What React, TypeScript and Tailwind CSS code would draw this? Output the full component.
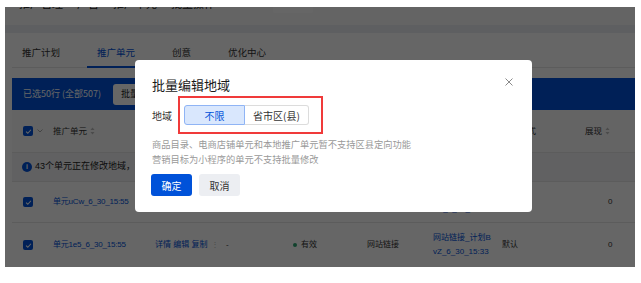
import React from "react";

const cols = "grid grid-cols-[41px_102px_71px_67px_74px_66px_69px_83px_1fr] items-center";

function Check() {
  return (
    <span className="flex h-[10px] w-[10px] items-center justify-center rounded-[2px] bg-[#0052d9]">
      <svg width="7" height="7" viewBox="0 0 8 8" fill="none">
        <path d="M1.2 4.1 3.2 6 6.8 2" stroke="#fff" strokeWidth="1.2" />
      </svg>
    </span>
  );
}

function SortIcon() {
  return (
    <svg width="5" height="8" viewBox="0 0 5 8" className="ml-[3px]">
      <path d="M2.5 0.5 4.5 3H0.5z" fill="#bbb" />
      <path d="M2.5 7.5 4.5 5H0.5z" fill="#bbb" />
    </svg>
  );
}

function LinkCell({ a, b }: { a: string; b: string }) {
  return (
    <div className="flex flex-col leading-[14px] text-[#0052d9]">
      <span>{a}</span>
      <span>{b}</span>
    </div>
  );
}

export default function App() {
  return (
    <div className="w-[641px] h-[283px] bg-white pt-[7px] pl-[5px] font-['Noto_Sans_CJK_SC',sans-serif]">
      <div className="relative w-[630px] h-[260px] overflow-hidden bg-white text-[#333]">
        {/* top bar, cut off */}
        <div className="flex h-[18px] items-start bg-[#fafafa] pl-[14px] text-[11px]">
          <div className="-mt-[12px] flex w-[254px] gap-[14px] text-[#222]">
            <span>推广管理</span>
            <span>广告</span>
            <span>推广单元</span>
            <span>批量操作</span>
          </div>
          <div className="-mt-[9px] h-[15px] w-[40px] rounded-[2px] bg-white" />
        </div>
        <div className="h-[8px] bg-[#eceef2]" />

        {/* tabs */}
        <div className="ml-[7px] flex h-[35px] gap-[17px] border-b border-[#e7e7e7] pt-[4px] text-[9.5px]">
          <div className="flex items-center px-[10px]">推广计划</div>
          <div className="relative flex items-center px-[10px] text-[#0052d9]">
            推广单元
            <div className="absolute bottom-[-1px] left-0 right-[5px] h-[2px] bg-[#0052d9]" />
          </div>
          <div className="flex items-center px-[10px]">创意</div>
          <div className="flex items-center px-[10px]">优化中心</div>
        </div>

        {/* selection bar */}
        <div className="ml-[7px] mt-[10px] flex h-[32px] items-center bg-[#0052d9] pl-[11px] text-[9px] text-white">
          <span>已选50行 (全部507)</span>
          <div className="ml-[12px] flex h-[21px] items-center rounded-[3px] bg-white px-[8px] text-[#222]">
            批量编辑
          </div>
        </div>

        {/* table */}
        <div className="ml-[7px] text-[8px] font-['Liberation_Sans','Noto_Sans_CJK_SC',sans-serif]">
          <div className={`${cols} h-[43px] border-b border-[#e7e7e7] bg-[#fafafa] text-[8.5px]`}>
            <div className="flex items-center pl-[11px]">
              <Check />
              <svg width="6" height="4" viewBox="0 0 6 4" className="ml-[4px]">
                <path d="M0.5 0.5 3 3 5.5 0.5" stroke="#aaa" fill="none" />
              </svg>
            </div>
            <div className="flex items-center">推广单元<SortIcon /></div>
            <div>操作</div>
            <div>预算</div>
            <div>状态</div>
            <div>推广类型</div>
            <div>推广计划</div>
            <div>出价方式</div>
            <div className="flex items-center">展现<SortIcon /></div>
          </div>

          <div className="flex h-[29px] items-center border-b border-[#e7e7e7] bg-[#f2f3f5] pl-[10px] text-[9px]">
            <span className="flex h-[10px] w-[10px] items-center justify-center rounded-full bg-[#0052d9] text-[7px] font-bold text-white">
              i
            </span>
            <span className="ml-[3px] text-[#222]">43个单元正在修改地域，请稍后刷新页面查看修改结果</span>
          </div>

          <div className={`${cols} h-[41px] border-b border-[#e7e7e7]`}>
            <div className="pl-[11px]"><Check /></div>
            <div className="tracking-[-0.2px] text-[#0052d9]">单元uCw_6_30_15:55</div>
            <div className="text-[#0052d9]">详情 编辑 复制</div>
            <div>-</div>
            <div>有效</div>
            <div>网站链接</div>
            <LinkCell a="网站链接_计划A" b="uC_6_30_15:33" />
            <div>默认</div>
            <div className="pl-[23px]">0</div>
          </div>

          <div className={`${cols} h-[44px]`}>
            <div className="pl-[11px]"><Check /></div>
            <div className="tracking-[-0.2px] text-[#0052d9]">单元1e5_6_30_15:55</div>
            <div className="flex items-center whitespace-nowrap text-[#0052d9]">
              详情 编辑 复制<span className="ml-[4px] text-[#bbb]">⋮</span>
            </div>
            <div>-</div>
            <div className="flex items-center">
              <span className="mr-[4px] h-[4px] w-[4px] rounded-full bg-[#2ba471]" />
              有效
            </div>
            <div>网站链接</div>
            <LinkCell a="网站链接_计划B" b="vZ_6_30_15:33" />
            <div>默认</div>
            <div className="pl-[23px]">0</div>
          </div>
        </div>

        {/* mask */}
        <div className="absolute inset-0 bg-black/60" />

        {/* dialog */}
        <div className="absolute left-[130px] top-[53px] h-[152px] w-[397px] rounded-[4px] bg-white pl-[17px] pt-[16px]">
          <div className="flex h-[18px] items-center justify-between pr-[19px]">
            <span className="text-[13px] text-[#1a1a1a]">批量编辑地域</span>
            <svg width="8" height="8" viewBox="0 0 8 8" className="-mt-[6px]">
              <path d="M0.5 0.5 7.5 7.5M7.5 0.5 0.5 7.5" stroke="#8a8a8a" strokeWidth="1" />
            </svg>
          </div>

          <div className="mt-[2px] flex items-center">
            <span className="w-[26px] text-[10px] text-[#333]">地域</span>
            <div className="border-2 border-[#f03a3a] pb-[7px] pl-[4px] pr-[12px] pt-[7px]">
              <div className="flex h-[20px] text-[10px]">
                <div className="flex w-[61px] items-center justify-center rounded-l-[3px] border border-[#8fb4f5] bg-[#d9e7fd] text-[#0052d9]">
                  不限
                </div>
                <div className="flex w-[64px] items-center justify-center rounded-r-[3px] border border-l-0 border-[#dcdcdc] text-[#333]">
                  省市区(县)
                </div>
              </div>
            </div>
          </div>

          <div className="mt-[3px] text-[9.25px] leading-[15px] text-[#999]">
            <div>商品目录、电商店铺单元和本地推广单元暂不支持区县定向功能</div>
            <div>营销目标为小程序的单元不支持批量修改</div>
          </div>

          <div className="-ml-[1px] mt-[7px] flex gap-[7px] text-[10px]">
            <div className="flex h-[22px] w-[41px] items-center justify-center rounded-[3px] bg-[#0052d9] text-white">
              确定
            </div>
            <div className="flex h-[22px] w-[41px] items-center justify-center rounded-[3px] bg-[#eceef2] text-[#333]">
              取消
            </div>
          </div>
        </div>
      </div>
    </div>
  );
}
